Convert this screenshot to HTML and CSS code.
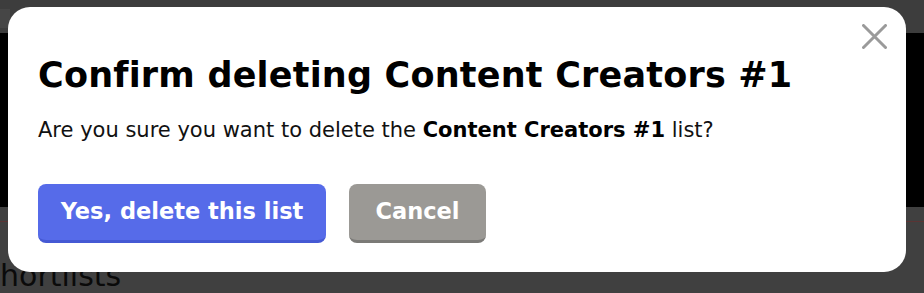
FILE: index.html
```html
<!DOCTYPE html>
<html lang="en">
<head>
<meta charset="utf-8">
<title>Confirm deleting</title>
<link rel="stylesheet" href="styles.css">
</head>
<body>
<div class="page">
  <header class="topbar"><div class="topbar-band"></div></header>
  <section class="hero"></section>
  <section class="content">
    <div class="rule"></div>
    <h2 class="page-title">Shortlists</h2>
  </section>
</div>

<div class="modal" role="dialog" aria-modal="true">
  <button class="close" aria-label="Close">
    <svg width="25" height="25" viewBox="0 0 25 25" aria-hidden="true">
      <path d="M1.5 1.5 L23.5 23.5 M23.5 1.5 L1.5 23.5" stroke="#9a9a9a" stroke-width="3" stroke-linecap="round" fill="none"/>
    </svg>
  </button>
  <h1 class="modal-title">Confirm deleting Content Creators #1</h1>
  <p class="modal-text">Are you sure you want to delete the <strong>Content Creators #1</strong> list?</p>
  <div class="actions">
    <button class="btn btn-primary">Yes, delete this list</button>
    <button class="btn btn-secondary">Cancel</button>
  </div>
</div>
</body>
</html>
```

FILE: styles.css
```css
* { box-sizing: border-box; }

html, body {
  margin: 0;
  padding: 0;
}

body {
  width: 924px;
  height: 293px;
  overflow: hidden;
  background: #404040;
  font-family: "DejaVu Sans", "Noto Sans", sans-serif;
  position: relative;
}

.page {
  display: flex;
  flex-direction: column;
}

.topbar {
  height: 33px;
  background: #3d3d3d;
  padding-top: 9px;
}

.topbar-band {
  height: 19px;
  background: #464646;
  width: 10px;
}

.hero {
  height: 174px;
  background: #000;
}

.content {
  background: #404040;
  padding-top: 14px;
}

.rule {
  height: 1px;
  background: #5a3434;
}

.page-title {
  margin: 36px 0 0 -19px;
  font-size: 30px;
  line-height: 36px;
  font-weight: 400;
  color: #0a0a0a;
  white-space: nowrap;
}

.modal {
  position: absolute;
  left: 8px;
  top: 7px;
  width: 898px;
  height: 265px;
  background: #fff;
  border-radius: 22px;
  padding: 47px 30px 29px 30px;
  display: flex;
  flex-direction: column;
}

.close {
  position: absolute;
  right: 19px;
  top: 17px;
  width: 25px;
  height: 25px;
  padding: 0;
  border: 0;
  background: none;
  display: flex;
}

.modal-title {
  margin: 0;
  font-size: 35px;
  line-height: 42px;
  font-weight: 700;
  color: #000;
  letter-spacing: 0.2px;
  white-space: nowrap;
}

.modal-text {
  margin: 20px 0 0 0;
  font-size: 21px;
  line-height: 28px;
  color: #111;
  white-space: nowrap;
}

.modal-text strong {
  font-weight: 700;
  color: #000;
}

.actions {
  margin-top: 40px;
  display: flex;
  gap: 23px;
}

.btn {
  height: 59px;
  border: 0;
  border-radius: 8px;
  font-family: "DejaVu Sans", "Noto Sans", sans-serif;
  font-size: 22.5px;
  font-weight: 700;
  color: #fff;
  padding: 0 0 3px 0;
  display: flex;
  align-items: center;
  justify-content: center;
  white-space: nowrap;
}

.btn-primary {
  width: 288px;
  background: #566be9;
  border-bottom: 3px solid #4559d4;
}

.btn-secondary {
  width: 137px;
  background: #9b9995;
  border-bottom: 3px solid #7b7a77;
}
```
